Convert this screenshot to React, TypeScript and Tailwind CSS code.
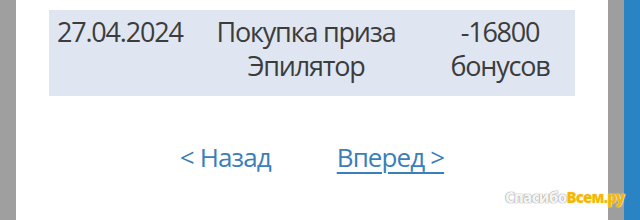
export default function App() {
  return (
    <div className="relative flex h-[220px] w-[640px] overflow-hidden bg-white">
      <div className="w-[16px] shrink-0 bg-[#9f9f9f]" />
      <div className="flex flex-1 flex-col" style={{ fontFamily: '"Open Sans", sans-serif' }}>
        <div className="mx-[33px] mt-[10px] grid grid-cols-[158px_198px_1fr] whitespace-nowrap bg-[#dfe6f2] pb-[13px] pt-[5px] text-[27px] leading-[34px] text-[#3c3c3c] tracking-[-1.2px]">
          <div className="pl-2">27.04.2024</div>
          <div className="text-center">
            Покупка приза
            <br />
            Эпилятор
          </div>
          <div className="pl-[20px] text-center">
            -16800
            <br />
            бонусов
          </div>
        </div>
        <div className="mt-[44px] flex justify-center gap-[66px] text-[26px] leading-[34px] text-[#3a7fb9] tracking-[-0.9px]">
          <a href="#">&lt; Назад</a>
          <a href="#" className="underline underline-offset-[5px] decoration-[2px]">
            Вперед &gt;
          </a>
        </div>
      </div>
      <div className="w-[16px] shrink-0 bg-[#9e9e9e]" />
      <div className="w-[16px] shrink-0 bg-[#2a83c3]" />
      <div
        className="absolute left-[505px] top-[188px] text-[15px] font-extrabold leading-[18px] tracking-[-0.8px]"
        style={{ fontFamily: '"Open Sans", sans-serif' }}
      >
        <span className="text-[#f4f4f4] [text-shadow:0_0_1px_#8a8a8a,0_0_1px_#8a8a8a]">Спасибо</span>
        <span className="text-[#f5b800] [text-shadow:0_0_1px_#ffffff,0_0_2px_#e0e0e0]">Всем.ру</span>
      </div>
    </div>
  );
}
